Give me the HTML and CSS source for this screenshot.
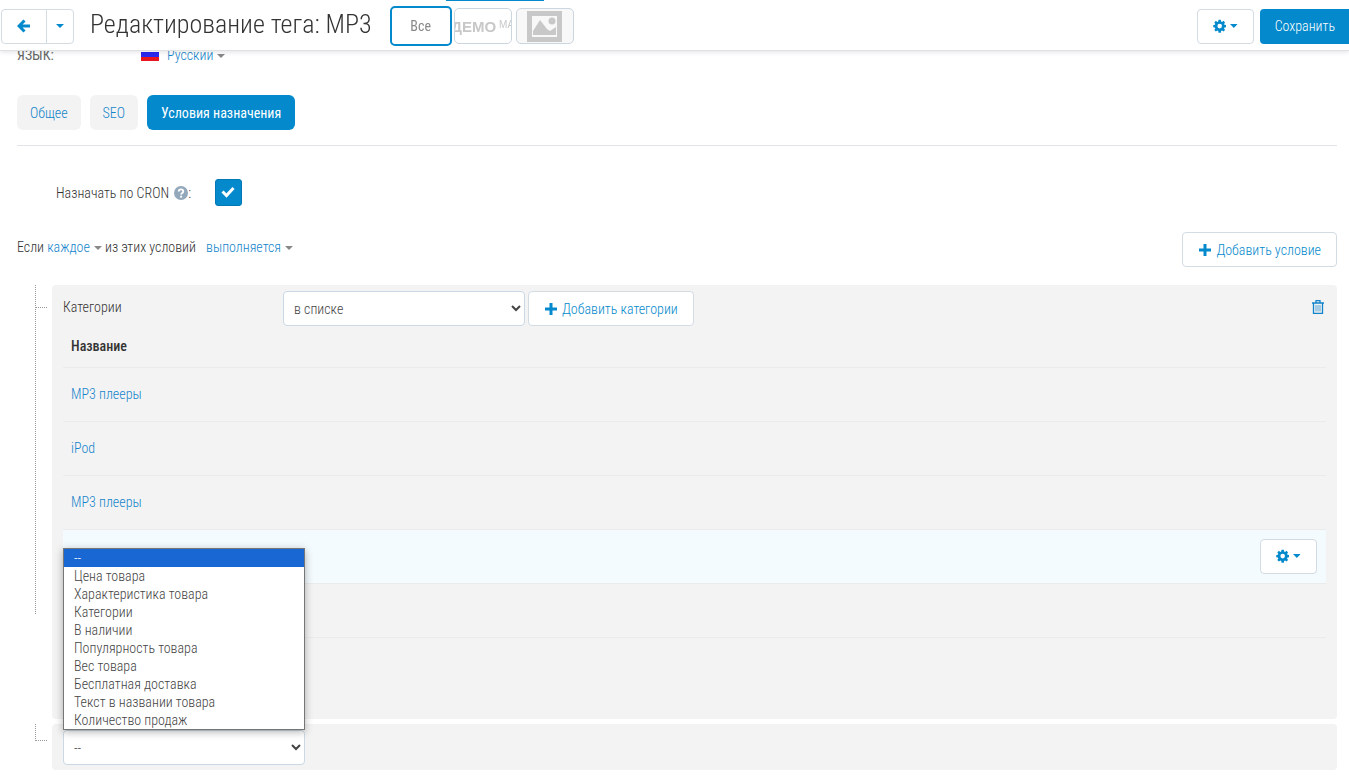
FILE: index.html
```html
<!DOCTYPE html>
<html lang="ru">
<head>
<meta charset="utf-8">
<title>Редактирование тега: MP3</title>
<link rel="stylesheet" href="styles.css">
</head>
<body>
<svg class="sprite" aria-hidden="true">
  <symbol id="i-gear" viewBox="0 0 14 14"><path fill-rule="evenodd" d="M5.800.5h2.400l.3 1.800 1 .4 1.500-1.100 1.600 1.700-1 1.500.4 1 1.800.3v2.200l-1.800.4-.4 1 1 1.400-1.600 1.700-1.500-1-1 .4-.3 1.800H5.800l-.3-1.800-1-.4-1.500 1-1.600-1.700 1-1.400-.4-1L.2 8.300V6.100L2 5.800l.4-1-1-1.500L3 1.600l1.500 1.100 1-.4zM7 4.700a2.400 2.400 0 1 0 0 4.800 2.400 2.400 0 0 0 0-4.800z"/></symbol>
  <symbol id="i-plus" viewBox="0 0 12 12"><path d="M4.500 0h3v4.500H12v3H7.500V12h-3V7.500H0v-3h4.500z"/></symbol>
  <symbol id="i-caret" viewBox="0 0 8 4"><path d="M0 0h8L4 4z"/></symbol>
</svg>

<header class="topbar">
  <div class="progress"></div>
  <div class="split">
    <button class="btn back" aria-label="Назад"><svg width="14" height="14" viewBox="0 0 14 14"><path d="M7.500 1.500 2 7l5.500 5.500M2.500 7H13" fill="none" stroke="currentColor" stroke-width="3"/></svg></button>
    <button class="btn more" aria-label="Ещё"><svg class="caret"><use href="#i-caret"/></svg></button>
  </div>
  <h1 class="title">Редактирование тега: MP3</h1>
  <div class="stores">
    <button class="store store-active">Все</button>
    <button class="store store-demo"><span class="demo">ДЕМО<small>МА</small></span></button>
    <button class="store store-image" aria-label="Изображение"><svg width="35" height="31" viewBox="0 0 35 31"><path fill="#c8c8c8" fill-rule="evenodd" d="M0 0h35v31H0zM5 5v21h25V5z"/><path fill="#c8c8c8" d="M6 24v-4l7-11 7 9 3 2 6-4v8z"/><circle cx="25" cy="10" r="3.500" fill="#c8c8c8"/></svg></button>
  </div>
  <button class="btn gear" aria-label="Настройки"><svg class="ico-gear"><use href="#i-gear"/></svg><svg class="caret"><use href="#i-caret"/></svg></button>
  <button class="save">Сохранить</button>
</header>

<main class="page">
  <div class="lang">
    <span class="lang-label">ЯЗЫК:</span>
    <svg class="flag" width="18" height="12" viewBox="0 0 18 12"><path fill="#fff" d="M0 0h18v4H0z"/><path fill="#2a2af0" d="M0 3h18v5H0z"/><path fill="#e8171f" d="M0 8h18v4H0z"/></svg>
    <a href="#" class="link">Русский<svg class="caret grey"><use href="#i-caret"/></svg></a>
  </div>

  <nav class="tabs">
    <button class="tab">Общее</button>
    <button class="tab">SEO</button>
    <button class="tab tab-active">Условия назначения</button>
  </nav>

  <div class="cron">
    <label for="cron" class="cron-label">Назначать по CRON <svg class="help" width="14" height="14" viewBox="0 0 13 13"><circle cx="6.500" cy="6.500" r="6.500" fill="#94a8bb"/><path d="M4.400 5.200c0-2.800 4.200-2.600 4.200-.2C8.600 6.500 6.600 6.400 6.600 8" fill="none" stroke="#fff" stroke-width="1.700"/><path fill="#fff" d="M5.700 9h1.800v1.800H5.700z"/></svg>:</label>
    <span class="check"><input type="checkbox" id="cron" checked><svg width="14" height="12" viewBox="0 0 14 12"><path d="m1.500 5.500 4 4 7-7.500" fill="none" stroke="#fff" stroke-width="3"/></svg></span>
  </div>

  <div class="rule">
    <p class="sentence">Если <a href="#" class="link">каждое<svg class="caret grey"><use href="#i-caret"/></svg></a> из этих условий <a href="#" class="link link-next">выполняется<svg class="caret grey"><use href="#i-caret"/></svg></a></p>
    <button class="btn add"><svg class="ico-plus"><use href="#i-plus"/></svg>Добавить условие</button>
  </div>

  <div class="conditions">
    <div class="node">
      <div class="tree tree-long"><i class="branch"></i></div>
      <section class="panel">
        <div class="panel-head">
          <label for="mode" class="panel-name">Категории</label>
          <select id="mode" class="select"><option>в списке</option></select>
          <button class="btn add"><svg class="ico-plus"><use href="#i-plus"/></svg>Добавить категории</button>
          <button class="trash" aria-label="Удалить"><svg width="12" height="14" viewBox="0 0 12 14" fill="none" stroke="currentColor"><path d="M0 3h12M4 2.500v-2h4v2M1.500 3v10.300h9V3" stroke-width="1.300"/><path d="M4 5v6.500M6 5v6.500M8 5v6.500" stroke-width=".7"/></svg></button>
        </div>
        <table class="table">
          <thead><tr><th>Название</th><th></th></tr></thead>
          <tbody>
            <tr><td><a href="#" class="link">MP3 плееры</a></td><td></td></tr>
            <tr><td><a href="#" class="link">iPod</a></td><td></td></tr>
            <tr><td><a href="#" class="link">MP3 плееры</a></td><td></td></tr>
            <tr class="hovered"><td></td><td><button class="btn gear" aria-label="Действия"><svg class="ico-gear"><use href="#i-gear"/></svg><svg class="caret"><use href="#i-caret"/></svg></button></td></tr>
            <tr><td></td><td></td></tr>
            <tr><td></td><td></td></tr>
          </tbody>
        </table>
      </section>
    </div>
    <div class="node">
      <div class="tree tree-end"></div>
      <section class="panel panel-new">
        <div class="picker">
          <select class="select" aria-label="Условие"><option>--</option></select>
          <ul class="menu" role="listbox" aria-label="Условие">
            <li role="option" class="chosen" aria-selected="true">--</li>
            <li role="option">Цена товара</li>
            <li role="option">Характеристика товара</li>
            <li role="option">Категории</li>
            <li role="option">В наличии</li>
            <li role="option">Популярность товара</li>
            <li role="option">Вес товара</li>
            <li role="option">Бесплатная доставка</li>
            <li role="option">Текст в названии товара</li>
            <li role="option">Количество продаж</li>
          </ul>
        </div>
      </section>
    </div>
  </div>
</main>
</body>
</html>
```
FILE: styles.css
```css
* { box-sizing: border-box; }
body {
  margin: 0;
  overflow-x: hidden;
  background: #fff;
  color: #333;
  font: 300 14px/18px "Roboto Condensed", Roboto, sans-serif;
}
button, select, input { font: inherit; color: inherit; margin: 0; }
button { cursor: pointer; white-space: nowrap; }
.sprite { display: none; }
.link { color: #1384cb; text-decoration: none; }
.caret { width: 8px; height: 4px; fill: currentColor; margin-left: 4px; vertical-align: middle; }
.grey { color: #888; }
.ico-gear { width: 14px; height: 14px; fill: currentColor; }
.ico-plus { width: 12px; height: 12px; fill: currentColor; margin-right: 5px; }

.btn {
  display: inline-flex;
  align-items: center;
  justify-content: center;
  height: 35px;
  padding: 0 15px;
  border: 1px solid #d3dbe3;
  border-radius: 4px;
  background: #fff;
  color: #0489cc;
}
.add { padding: 0 15px 0 16px; }

.topbar {
  position: fixed;
  inset: 0 0 auto 0;
  z-index: 10;
  display: flex;
  align-items: center;
  height: 51px;
  padding: 2px 0 0 1px;
  background: #fff;
  border-bottom: 1px solid #dfe2e5;
  box-shadow: 0 1px 5px rgba(0, 0, 0, .12);
}
.progress { position: absolute; top: 0; left: 446px; width: 98px; height: 1px; background: #0489cc; }
.split { display: flex; }
.back { width: 46px; border-radius: 4px 0 0 4px; }
.more { width: 28px; margin-left: -1px; padding: 0; border-radius: 0 4px 4px 0; }
.more .caret { margin: 0; }
.title { margin: 0 18px 4px 16px; font-size: 26px; line-height: 34px; font-weight: 300; white-space: nowrap; }
.stores { display: flex; align-items: center; margin-right: auto; }
.store {
  display: flex;
  align-items: center;
  justify-content: center;
  overflow: hidden;
  width: 58px;
  height: 36px;
  margin-right: 4px;
  padding: 0;
  border: 1px solid #ccd6df;
  border-radius: 5px;
  background: #fff;
  color: #888;
}
.store-active { width: 62px; height: 40px; margin-right: 2px; border: 2px solid #0489cc; font-weight: 400; }
.store-image { background: #f8f8f8; }
.demo { font: 700 15px/18px "Liberation Sans", Arial, sans-serif; color: #c8c8c8; }
.demo small { margin-left: 3px; font-size: 10px; font-weight: 400; vertical-align: 4px; }
.gear { width: 57px; }
.gear .caret { margin-left: 4px; }
.save {
  height: 35px;
  margin-left: 6px;
  padding: 0 13px 0 15px;
  border: 0;
  border-radius: 4px 0 0 4px;
  background: #0489cc;
  color: #fff;
}
.topbar .save { padding-right: 14px; }

.page { padding: 46px 12px 14px 17px; }
.lang { display: flex; align-items: center; height: 18px; }
.lang-label { width: 124px; color: #666; font-weight: 400; }
.flag { margin-right: 8px; }

.tabs { display: flex; gap: 9px; padding: 31px 0 15px; border-bottom: 1px solid #e4e4e8; }
.tab { height: 35px; padding: 0 13px; border: 0; border-radius: 6px; background: #f3f3f3; color: #1384cb; }
.tab-active { padding: 0 14px; background: #0489cc; color: #fff; font-weight: 400; }

.cron { display: flex; align-items: center; height: 27px; margin-top: 33px; }
.cron-label { width: 159px; margin-left: 39px; }
.help { margin-left: 2px; vertical-align: -2px; }
.check { position: relative; width: 27px; height: 27px; }
.check input { appearance: none; display: block; width: 27px; height: 27px; border: 1px solid #0278b5; border-radius: 3px; background: #0489cc; }
.check svg { position: absolute; top: 7px; left: 6px; pointer-events: none; }

.rule { display: flex; align-items: center; justify-content: space-between; margin: 26px 0 18px; }
.sentence { margin: 0 0 6px; }
.link-next { margin-left: 7px; }

.conditions { display: grid; gap: 5px; }
.node { display: grid; grid-template-columns: 35px 1fr; }
.tree { width: 12px; margin-left: 18px; border-left: 1px dotted #999; }
.tree-long { margin-bottom: 105px; }
.branch { display: block; height: 23px; border-bottom: 1px dotted #999; }
.tree-end { height: 17px; border-bottom: 1px dotted #999; }
.panel { padding: 6px 11px 28px; border-radius: 4px; background: #f3f3f3; }
.panel-head { display: flex; align-items: center; }
.panel-name { width: 220px; padding-bottom: 3px; }
.select { width: 242px; height: 35px; padding: 0 8px 0 6px; border: 1px solid #ccd8e4; border-radius: 4px; background: #fff; color: #444; }
.panel-head .add { margin-left: 3px; }
.trash { width: 12px; height: 18px; margin: 0 2px 0 auto; padding: 0; border: 0; background: none; color: #1384cb; }

.table { width: 100%; border-collapse: collapse; }
.table th { height: 41px; padding: 0 8px; border-bottom: 1px solid #ebebeb; text-align: left; font-weight: 500; }
.table td { height: 54px; padding: 0 8px; border-bottom: 1px solid #ebebeb; }
.table td + td { width: 80px; padding: 0 9px; text-align: right; }
.table tr:last-child td { border-bottom: 0; }
.hovered { background: #f3fbff; }

.panel-new { padding: 6px 11px 5px; }
.picker { position: relative; width: 242px; }
.picker .select { display: block; }
.menu {
  position: absolute;
  bottom: 100%;
  left: 0;
  width: 100%;
  margin: 0;
  padding: 0;
  border: 1px solid #767676;
  background: #fff;
  box-shadow: 0 2px 8px rgba(0, 0, 0, .3);
  color: #444;
  list-style: none;
}
.menu li { padding: 0 10px; }
.menu .chosen { background: #1967d2; color: #fff; }
```
